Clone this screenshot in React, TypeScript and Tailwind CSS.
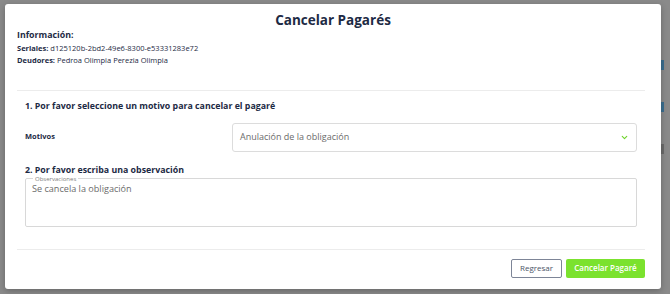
import React from "react";
import { ChevronDown } from "lucide-react";

export default function App() {
  return (
    <div className="relative w-[670px] h-[294px] overflow-hidden bg-[#8a8a8a] font-['Open_Sans',sans-serif]">
      {/* faint page behind overlay */}
      <div className="absolute right-0 top-[44px] w-[9px] h-[250px] flex flex-col gap-[32px] pt-[16px]">
        <div className="h-[10px] w-[3px] bg-[#3b6d8e]" />
        <div className="h-[10px] w-[3px] bg-[#3b6d8e]" />
        <div className="h-[10px] w-[3px] bg-[#6a6a6a]" />
      </div>

      <div className="absolute left-[5px] top-[4px] w-[656px] h-[285px] bg-white rounded-[3px] shadow-[0_2px_6px_rgba(0,0,0,0.25)] flex flex-col pl-[12px] pr-[16px]">
        <h1 className="text-center text-[13.5px] font-bold text-[#1d2a44] leading-none pt-[10px] pl-[4px]">
          Cancelar Pagarés
        </h1>

        <div className="text-[#1d2a44] pt-[1px]">
          <p className="text-[8.8px] font-bold leading-[12px]">Información:</p>
          <p className="text-[7.5px] leading-[12px] mt-[1px]">
            <span className="font-bold">Seriales:</span> d125120b-2bd2-49e6-8300-e53331283e72
          </p>
          <p className="text-[7.5px] leading-[12px]">
            <span className="font-bold">Deudores:</span> Pedroa Olimpia Perezia Olimpia
          </p>
        </div>

        <div className="border-t border-[#ececec] mt-[24px]" />

        <div className="px-[8px] pt-[9px]">
          <p className="text-[8.8px] font-bold text-[#1d2a44] leading-[12px]">
            1. Por favor seleccione un motivo para cancelar el pagaré
          </p>

          <div className="flex items-center mt-[11px]">
            <span className="w-[207px] text-[7.5px] font-bold text-[#1d2a44]">Motivos</span>
            <div className="flex-1 h-[29px] border border-[#dcdcdc] rounded-[3px] flex items-center justify-between px-[7px]">
              <span className="text-[9px] text-[#6b6b6b]">Anulación de la obligación</span>
              <ChevronDown className="w-[9px] h-[9px] text-[#6fd42c]" strokeWidth={3} />
            </div>
          </div>

          <p className="text-[8.8px] font-bold text-[#1d2a44] leading-[12px] mt-[12px]">
            2. Por favor escriba una observación
          </p>

          <fieldset className="h-[51px] border border-[#d8d8d8] rounded-[2px] px-[6px]">
            <legend className="text-[6px] text-[#808080] px-[2px] ml-[1px] leading-[6px]">
              Observaciones
            </legend>
            <p className="text-[9.1px] text-[#6b6b6b] leading-[9px] mt-[2px]">
              Se cancela la obligación
            </p>
          </fieldset>
        </div>

        <div className="border-t border-[#ececec] mt-[22px]" />

        <div className="flex justify-end gap-[4px] pt-[9px]">
          <button className="h-[19px] w-[51px] border border-[#7d8597] rounded-[2px] text-[8px] text-[#4b5568] bg-white">
            Regresar
          </button>
          <button className="h-[19px] w-[79px] rounded-[2px] text-[8px] font-semibold text-white bg-[#7be22e]">
            Cancelar Pagaré
          </button>
        </div>
      </div>
    </div>
  );
}
